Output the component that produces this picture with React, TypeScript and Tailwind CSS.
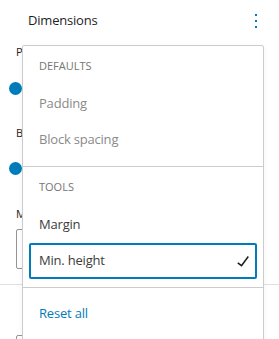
import React from 'react';

const MoreVertical = ({ className }: { className?: string }) => (
  <svg viewBox="0 0 24 24" width="24" height="24" className={className} fill="currentColor">
    <path d="M13 19h-2v-2h2v2zm0-6h-2v-2h2v2zm0-6h-2V5h2v2z" />
  </svg>
);

const Check = () => (
  <svg viewBox="0 0 24 24" width="24" height="24" fill="#1e1e1e">
    <path d="M16.7 7.1l-6.3 8.5-3.2-2.4-.9 1.2 4.4 3.4 7.2-9.7z" />
  </svg>
);

const groups = [
  {
    label: 'Defaults',
    items: [
      { name: 'Padding', muted: true },
      { name: 'Block spacing', muted: true },
    ],
  },
  {
    label: 'Tools',
    items: [
      { name: 'Margin', muted: false },
      { name: 'Min. height', muted: false, selected: true },
    ],
  },
];

const Label = ({ children, className }: { children: React.ReactNode; className?: string }) => (
  <div className={`text-[11px] leading-4 font-medium uppercase text-[#1e1e1e] ${className ?? ''}`}>{children}</div>
);

export default function App() {
  return (
    <div className="relative w-[279px] h-[339px] overflow-hidden bg-white font-['Open_Sans',sans-serif] text-[#1e1e1e]">
      {/* panel underneath */}
      <div className="px-4">
        <div className="mt-[9px] flex h-6 items-center justify-between pl-3">
          <span className="text-[13px] font-medium tracking-[-0.2px]">Dimensions</span>
          <MoreVertical className="-mr-[5px] text-[#007cba]" />
        </div>
        <Label className="mt-[11px]">Padding</Label>
        <div className="mt-[22px] -ml-[7px] h-[13px] w-[13px] rounded-full bg-[#007cba]" />
        <Label className="mt-[30px]">Block spacing</Label>
        <div className="mt-[21px] -ml-[7px] h-[13px] w-[13px] rounded-full bg-[#007cba]" />
        <Label className="mt-[31px]">Minimum height</Label>
        <div className="mt-[7px] h-10 rounded-[2px] border border-[#949494]" />
      </div>
      <div className="mt-[15px] h-px bg-[#e0e0e0]" />
      <div className="px-4">
        <div className="mt-[11px] flex h-6 items-center justify-between pl-3">
          <span className="text-[13px] font-medium">Typography</span>
          <MoreVertical className="-mr-[5px] text-[#1e1e1e]" />
        </div>
        <div className="mt-[15px] h-10 rounded-[2px] border border-[#949494]" />
      </div>

      {/* dropdown menu */}
      <div className="absolute left-[22px] top-[45px] w-[242px] rounded-[2px] border border-[#cccccc] bg-white shadow-[0_2px_6px_rgba(0,0,0,0.05)]">
        {groups.map((group) => (
          <div key={group.label} className="border-b border-[#cccccc] px-[6px] py-2">
            <div className="mb-2 flex h-6 items-center pl-[10px] text-[11px] font-medium uppercase text-[#757575]">
              {group.label}
            </div>
            {group.items.map((item) => (
              <div
                key={item.name}
                className={`flex h-9 items-center justify-between rounded-[2px] border-2 pl-2 text-[13px] tracking-[-0.2px] ${
                  item.selected ? 'border-[#007cba]' : 'border-transparent'
                } ${item.muted ? 'text-[#8a8a8a]' : 'text-[#3c3c3c]'}`}
              >
                <span>{item.name}</span>
                {item.selected && <Check />}
              </div>
            ))}
          </div>
        ))}
        <div className="px-[6px] py-2">
          <div className="flex h-9 items-center border-2 border-transparent pl-2 text-[13px] tracking-[-0.2px] text-[#007cba]">
            Reset all
          </div>
        </div>
      </div>
    </div>
  );
}
